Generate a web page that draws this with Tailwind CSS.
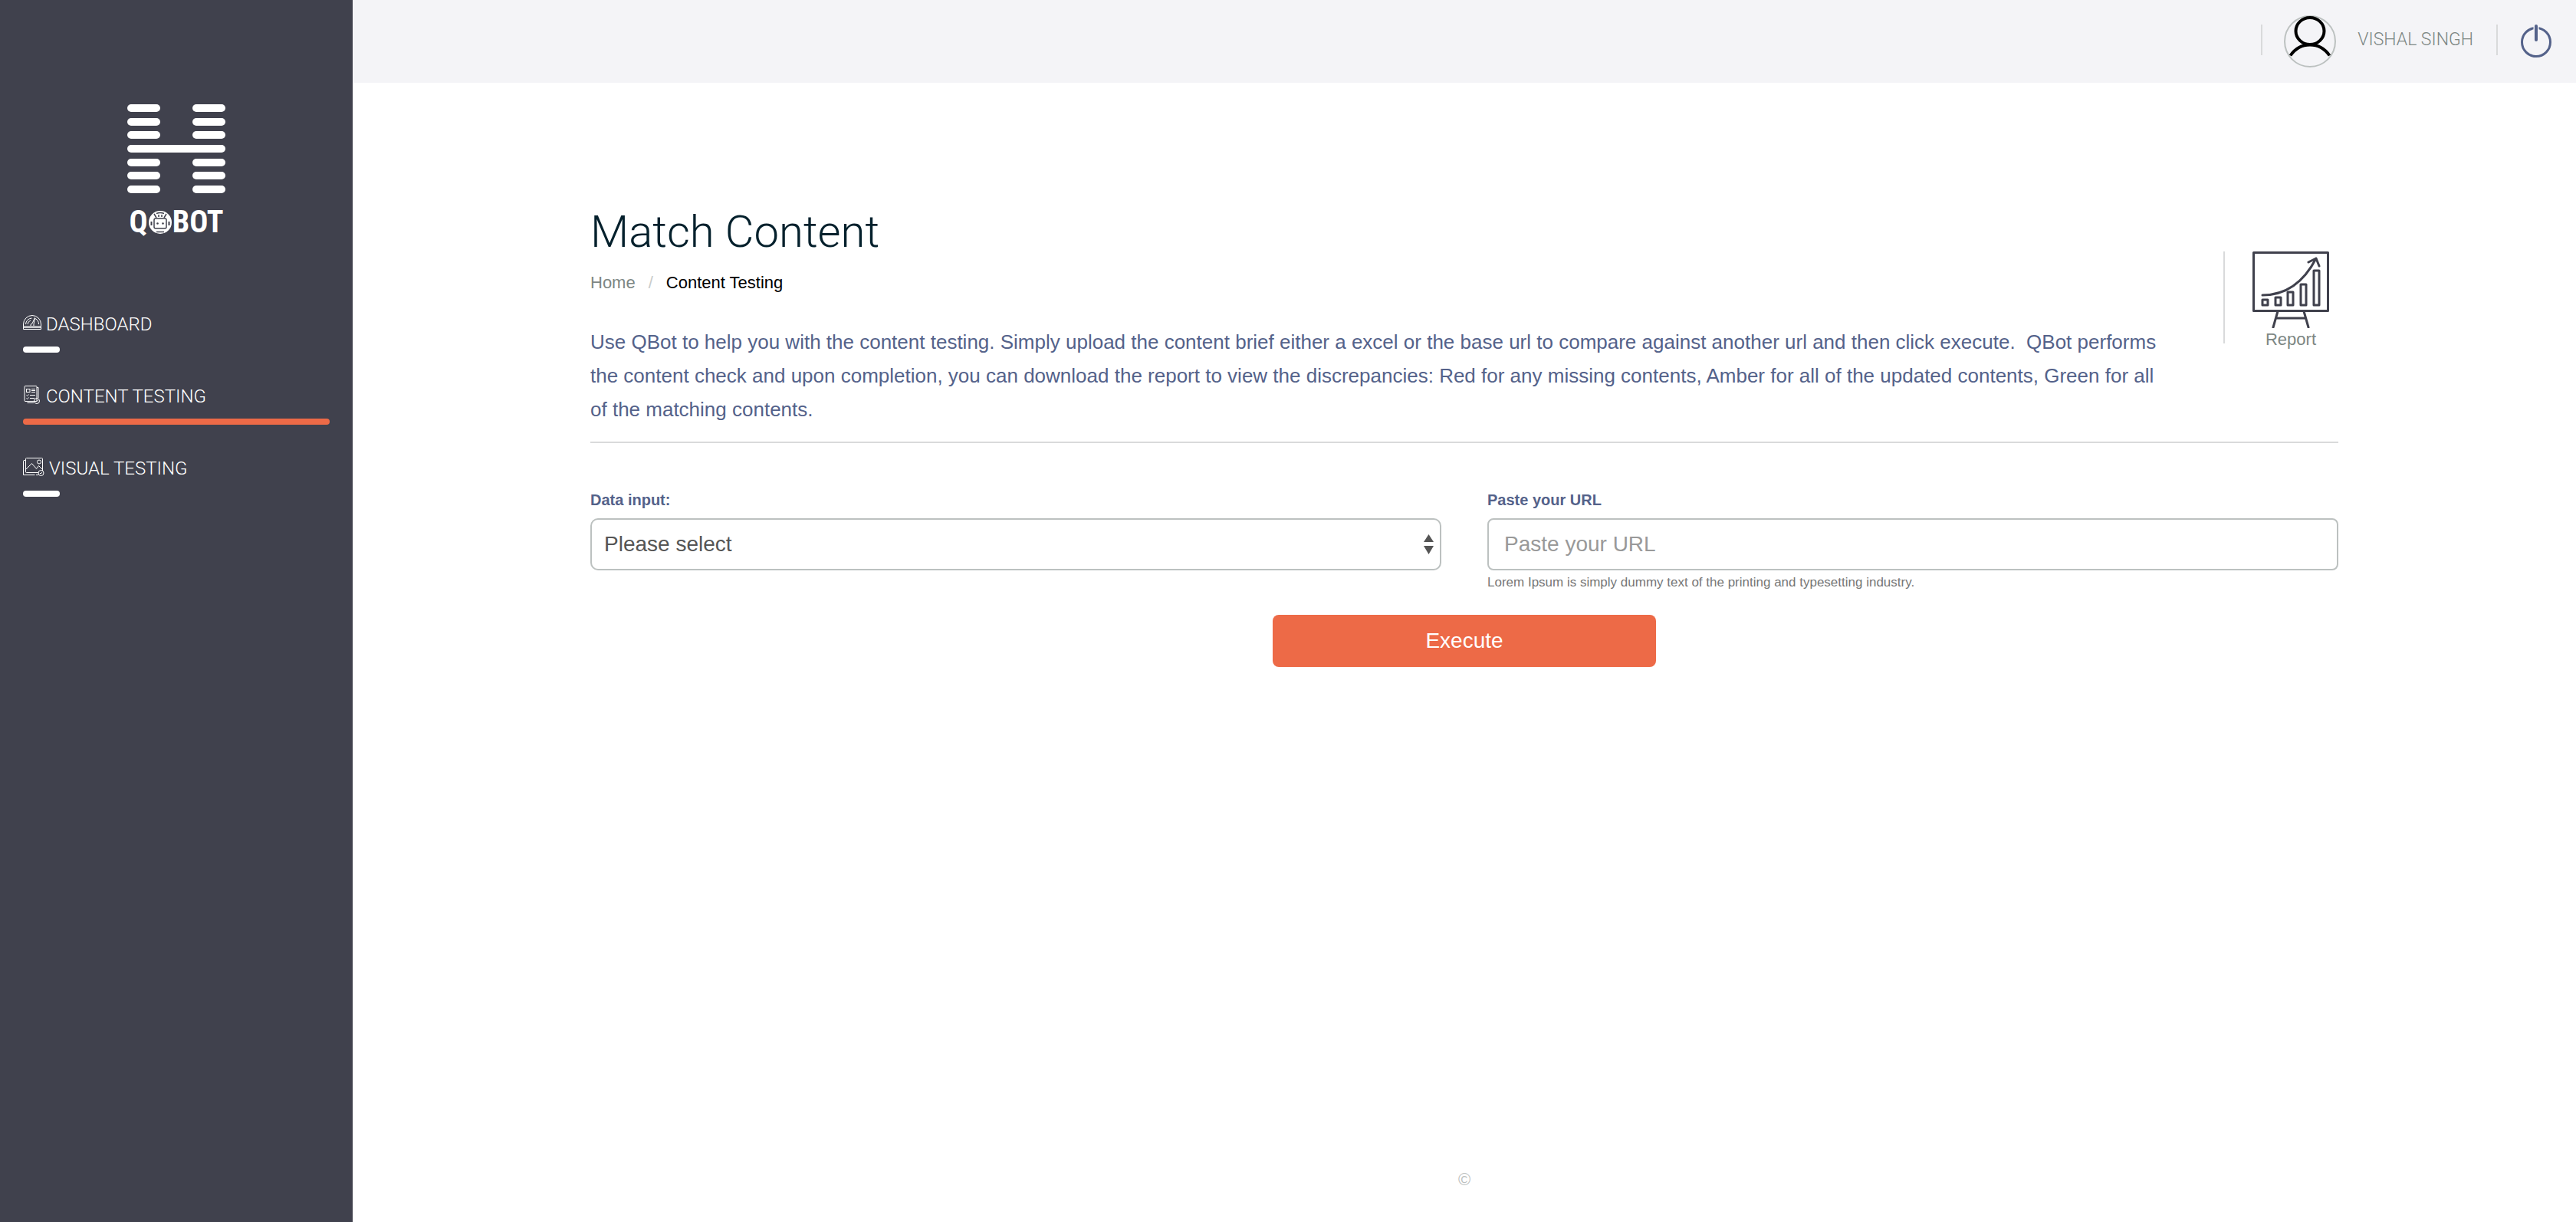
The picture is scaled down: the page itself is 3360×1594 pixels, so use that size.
<!DOCTYPE html>
<html lang="en">
<head>
<meta charset="utf-8">
<title>QBot - Match Content</title>
<script src="https://cdn.jsdelivr.net/npm/@tailwindcss/browser@4"></script>
</head>
<body class="bg-white font-['Liberation_Sans',sans-serif]">
<div class="flex min-h-screen">
  <aside class="w-[460px] shrink-0 bg-[#40414d] px-[30px] pt-[136px] text-white">
    <a href="#" class="flex flex-col items-center" aria-label="QBOT home">
      <svg class="w-32 h-[116px]" viewBox="0 0 128 116" fill="#fff">
        <rect x="0" y="0" width="43" height="10" rx="5"/><rect x="85" y="0" width="43" height="10" rx="5"/>
        <rect x="0" y="18" width="43" height="10" rx="5"/><rect x="85" y="18" width="43" height="10" rx="5"/>
        <rect x="0" y="35" width="43" height="10" rx="5"/><rect x="85" y="35" width="43" height="10" rx="5"/>
        <rect x="0" y="53" width="128" height="10" rx="5"/>
        <rect x="0" y="71" width="43" height="10" rx="5"/><rect x="85" y="71" width="43" height="10" rx="5"/>
        <rect x="0" y="88" width="43" height="10" rx="5"/><rect x="85" y="88" width="43" height="10" rx="5"/>
        <rect x="0" y="106" width="43" height="10" rx="5"/><rect x="85" y="106" width="43" height="10" rx="5"/>
      </svg>
      <span class="mt-4 flex items-center font-['Roboto_Condensed','Liberation_Sans_Narrow','Roboto',sans-serif] text-[40px] leading-[44px] font-bold">Q<svg class="mx-px size-[30px]" viewBox="0 0 30 30">
          <circle cx="15" cy="15" r="15" fill="#fff"/>
          <path d="M7 4l3 5M23 4l-3 5M10 3.500Q15 1.500 20 3.500M13 5v3M17 5v3" stroke="#40414d" stroke-width="1.500" fill="none"/>
          <rect x="7" y="10" width="16" height="13" rx="2" fill="none" stroke="#40414d" stroke-width="1.500"/>
          <path d="M3.500 14v5M26.500 14v5" stroke="#40414d" stroke-width="2"/>
          <circle cx="11.500" cy="16.500" r="1.300" fill="#40414d"/><circle cx="18.500" cy="16.500" r="1.300" fill="#40414d"/>
          <path d="M10 27.500h10" stroke="#40414d" stroke-width="1.500"/>
        </svg>BOT</span>
    </a>
    <nav class="mt-[90px] flex flex-col gap-9 font-['Roboto',sans-serif] text-2xl leading-7 font-light">
      <a href="#" class="flex flex-col gap-2">
        <span class="flex h-[42px] items-center gap-1.5">
          <svg class="mb-1 h-5 w-6" viewBox="0 0 24 20" fill="none" stroke="#fff" stroke-width="1"><path d="M.5 14.500V12a11.500 11.500 0 0 1 23 0v2.500zM.5 14.500v4h23v-4M.5 16.500h23M3.500 12a8.500 8.500 0 0 1 8-8M16 4.500a8.500 8.500 0 0 1 4.500 7.500M10 14a2.500 2.500 0 0 1 2-3l3.500-7.500L14 12v2M6 12a6 6 0 0 1 4-5"/></svg>DASHBOARD</span>
        <span class="h-2 w-12 rounded bg-white"></span>
      </a>
      <a href="#" aria-current="page" class="flex flex-col gap-2">
        <span class="flex h-[42px] items-center gap-1.5">
          <svg class="mb-1 size-6" viewBox="-1 0 24 24" fill="none" stroke="#fff" stroke-width="1"><rect x="1" y=".5" width="16" height="20" rx="1"/><path d="M17 2.500h2V16M4.500 22.500H13M10 4.500h5M10 6.500h5M10 8.500h5M8 12.500h7M8 16.500h6M3.500 12.500l1 1 2-2M3.500 16.500l1 1 2-2"/><rect x="3.500" y="4.500" width="4.500" height="4"/><circle cx="17" cy="20" r="3.500"/><path d="M15.500 20l1 1 2-2"/></svg>CONTENT TESTING</span>
        <span class="h-2 w-full rounded bg-[#ed6a47]"></span>
      </a>
      <a href="#" class="flex flex-col gap-2">
        <span class="flex h-[42px] items-center gap-1.5">
          <svg class="mb-1 h-6 w-7" viewBox="0 0 28 24" fill="none" stroke="#fff" stroke-width="1"><path d="M20 19.500H4.500a1 1 0 0 1-1-1v-17a1 1 0 0 1 1-1h20a1 1 0 0 1 1 1V17M3.500 3.500h-2a1 1 0 0 0-1 1v18h15M17 22.500h3M3.500 15.500l8-8 6 7 3-4 5 5"/><circle cx="21" cy="5.500" r="2.500"/><circle cx="23.500" cy="20" r="3.500"/><path d="M22 20l1 1 2-2"/></svg>VISUAL TESTING</span>
        <span class="h-2 w-12 rounded bg-white"></span>
      </a>
    </nav>
  </aside>

  <div class="flex min-w-0 flex-1 flex-col">
    <header class="flex h-[108px] items-center justify-end bg-[#f4f4f7] pr-8">
      <span class="mb-1 h-10 w-0.5 bg-[#d9dadb]"></span>
      <svg class="mx-7 size-[68px]" viewBox="0 0 68 68" fill="none"><circle cx="34" cy="34" r="33" stroke="#bcc1c0" stroke-width="2"/><ellipse cx="34" cy="20.500" rx="18.500" ry="17.500" stroke="#000" stroke-width="4"/><path d="M8.500 52.500Q18 38.500 34 38.500T59.500 52.500" stroke="#000" stroke-width="4"/></svg>
      <span class="mb-1 font-['Roboto',sans-serif] text-[23px] leading-7 font-light text-[#7d8784]">VISHAL SINGH</span>
      <span class="mx-[30px] mb-1 h-10 w-0.5 bg-[#d9dadb]"></span>
      <button type="button" aria-label="Log out"><svg class="h-11 w-10" viewBox="0 0 40 44" fill="none" stroke="#54628a"><circle cx="20" cy="23" r="18.500" stroke-width="3"/><path d="M20 0v18" stroke="#f4f4f7" stroke-width="7"/><path d="M20 2v18" stroke-width="4" stroke-linecap="round"/></svg></button>
    </header>

    <main class="mx-auto w-full max-w-[2280px] flex-1 pt-[158px]">
      <div class="flex border-b-2 border-[#d9dadb] pb-5">
        <div class="flex-1">
          <h1 class="font-['Roboto',sans-serif] text-[58px] leading-[72px] font-light text-[#04202c]">Match Content</h1>
          <nav aria-label="Breadcrumb" class="mt-4 flex gap-[17px] text-[22px] leading-[30px]">
            <a href="#" class="text-[#7d8784]">Home</a><span class="text-[#c9cccb]">/</span><span class="text-black">Content Testing</span>
          </nav>
          <p class="mt-10 pr-[72px] text-[26px] leading-[44px] text-[#54628a]">Use QBot to help you with the content testing. Simply upload the content brief either a excel or the base url to compare against another url and then click execute.&nbsp; QBot performs the content check and upon completion, you can download the report to view the discrepancies: Red for any missing contents, Amber for all of the updated contents, Green for all of the matching contents.</p>
        </div>
        <a href="#" class="mt-[62px] flex h-[120px] w-[150px] flex-col items-center border-l-2 border-[#d9dadb] pl-6 text-[22px] leading-[30px] text-[#7d8784]">
          <svg class="h-[100px] w-[100px] shrink-0" viewBox="0 0 100 100" fill="none" stroke="#40414d" stroke-width="3" stroke-linejoin="round" stroke-linecap="round"><rect x="1.500" y="1.500" width="97" height="76"/><path d="M33 78l-6 21M67 78l6 21M31 87h38M13 57C45 57 68 38 83 9M73 14l10-5 4 10"/><g><rect x="13" y="63" width="7" height="7"/><rect x="30" y="60" width="7" height="10"/><rect x="46" y="53" width="7" height="17"/><rect x="63" y="43" width="7" height="27"/><rect x="80" y="25" width="7" height="45"/></g></svg>
          Report
        </a>
      </div>
      <form class="mt-[58px]">
        <div class="grid grid-cols-2 gap-[60px]">
          <div>
            <label for="data" class="block text-xl leading-8 font-bold text-[#54628a]">Data input:</label>
            <div class="relative mt-2">
              <select id="data" class="block h-[68px] w-full appearance-none rounded-[10px] border-2 border-[#bcc1c0] bg-white px-4 text-[28px] text-[#555]"><option>Please select</option></select>
              <svg class="pointer-events-none absolute top-[21px] right-[10px] h-[26px] w-[13px]" viewBox="0 0 13 26" fill="#555"><path d="M0 10L6.500 0 13 10zM0 15h13L6.500 26z"/></svg>
            </div>
          </div>
          <div>
            <label for="url" class="block text-xl leading-8 font-bold text-[#54628a]">Paste your URL</label>
            <input id="url" type="url" placeholder="Paste your URL" class="mt-2 block h-[68px] w-full rounded-lg border-2 border-[#bcc1c0] bg-white px-5 text-[28px] placeholder:text-[#999]">
            <small class="mt-1 block text-[17px] leading-6 text-[#777]">Lorem Ipsum is simply dummy text of the printing and typesetting industry.</small>
          </div>
        </div>
        <button type="submit" class="mx-auto mt-[30px] block h-[68px] w-[500px] rounded-lg bg-[#ed6a47] text-[28px] text-white">Execute</button>
      </form>
    </main>
    <footer class="pb-10 text-center text-[22px] leading-[30px] text-[#bcc1c0]">©</footer>
  </div>
</div>
</body>
</html>
